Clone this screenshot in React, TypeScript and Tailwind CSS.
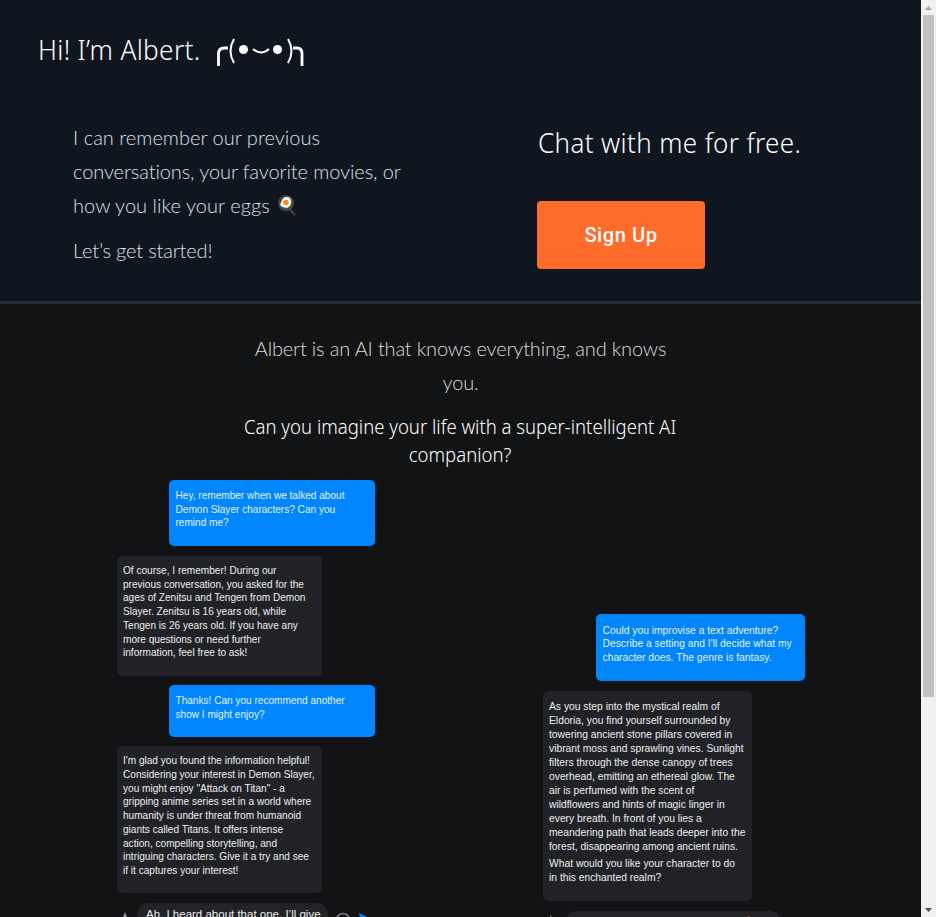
import React from "react";

function Bubble({ lines, className }: { lines: string[][]; className: string }) {
  return (
    <div className={"flex flex-col rounded-[5px] whitespace-nowrap " + className}>
      {lines.map((paragraph, i) => (
        <p key={i}>
          {paragraph.map((line) => (
            <span key={line} className="block">{line}</span>
          ))}
        </p>
      ))}
    </div>
  );
}

function FriedEgg() {
  return (
    <svg viewBox="0 0 20 22" className="h-[22px] w-5">
      <path d="M12 14.5 17.5 20.5" stroke="#484646" strokeWidth="2" strokeLinecap="round" />
      <circle cx="9" cy="9" r="8" fill="#484644" />
      <path d="M9 3c2.4-.6 5 1 5.2 4 .2 2.500-.6 3.500-1.400 5-.9 1.600-3.200 2.100-5 1.600-1.500-.4-3.300-.5-4.200-2-.9-1.700.5-2.700 1-4.300.6-2 1.900-3.800 4.400-4.300Z" fill="#fffaf2" />
      <circle cx="8.900" cy="8.500" r="2.700" fill="#f28b22" />
    </svg>
  );
}

function Scrollbar() {
  return (
    <div className="flex h-full w-[15px] flex-col items-center bg-[#f1f1f1]">
      <div className="flex h-[15px] w-full items-center justify-center">
        <svg viewBox="0 0 7 4" className="h-1 w-[7px]"><path d="M0 4 3.500 0 7 4Z" fill="#a3a3a3" /></svg>
      </div>
      <div className="h-[682px] w-[11px] bg-[#c1c1c1]" />
      <div className="mt-auto flex h-[15px] w-full items-center justify-center">
        <svg viewBox="0 0 7 4" className="h-1 w-[7px]"><path d="M0 0 3.500 4 7 0Z" fill="#505050" /></svg>
      </div>
    </div>
  );
}

export default function App() {
  return (
    <div className="flex h-[917px] w-[936px] overflow-hidden bg-[#121315]">
      <main className="flex h-full w-[921px] flex-col overflow-hidden text-white">
        <header className="flex h-[304px] shrink-0 flex-col border-b-[3px] border-[#292c37] bg-[#101620] pl-[38px]">
          <h1 className="mt-[29px] flex h-10 items-center whitespace-nowrap font-['Noto_Sans',sans-serif] text-[28px] font-light leading-10">
            <span className="w-[177px] origin-left scale-x-[0.935] tracking-[0.350px]">Hi! I’m Albert.</span>
            <svg viewBox="0 0 92 32" className="mt-[7px] h-8 w-[92px]" fill="none" stroke="white">
              <path d="M3.500 29V17q0-6 6-6H13M78 11h4q5 0 5 6v12" strokeWidth="2.800" />
              <path d="M19 2q-7 12 0 24M73 2q7 12 0 24" strokeWidth="2" />
              <path d="M38 12q8 7 16 0" strokeWidth="2" />
              <circle cx="28.500" cy="12.500" r="4.500" fill="white" stroke="none" />
              <circle cx="62.500" cy="12.500" r="4.500" fill="white" stroke="none" />
            </svg>
          </h1>
          <div className="flex">
            <div className="mt-[51px] ml-[35px] w-[465px] whitespace-nowrap font-['Lato',sans-serif] text-[20px] font-light leading-[34px] text-[#dce0e8]">
              <p>
                <span className="block tracking-[0.020px]">I can remember our previous</span>
                <span className="block tracking-[-0.100px]">conversations, your favorite movies, or</span>
                <span className="flex items-center gap-[7px] tracking-[0.050px]">how you like your eggs <FriedEgg /></span>
              </p>
              <p className="mt-[11px] tracking-[-0.160px]">Let’s get started!</p>
            </div>
            <div className="mt-[53px] flex flex-col items-start">
              <h2 className="h-10 origin-left scale-x-[0.927] whitespace-nowrap font-['Noto_Sans',sans-serif] text-[28px] font-light leading-10 tracking-[0.420px]">Chat with me for free.</h2>
              <button className="mt-[39px] -ml-px h-[68px] w-[168px] rounded-[4px] bg-[#ff6b2b] font-['Roboto',sans-serif] text-[20px] font-medium tracking-[0.600px]">Sign Up</button>
            </div>
          </div>
        </header>
        <section className="flex flex-col items-center pt-[27px] text-center whitespace-nowrap">
          <p className="font-['Lato',sans-serif] text-[20px] font-light leading-[34px] tracking-[-0.170px] text-[#dedede]">Albert is an AI that knows everything, and knows<br />you.</p>
          <h3 className="mt-[14px] scale-x-[0.927] font-['Noto_Sans',sans-serif] text-[20px] font-light leading-7">Can you imagine your life with a super-intelligent AI<br />companion?</h3>
        </section>
        <section className="mt-[11px] flex items-start font-['Liberation_Sans',Arial,sans-serif]">
          <div className="ml-[117px] w-[258px] shrink-0 text-[10.080px] leading-[13.700px]">
            <Bubble className="ml-[52px] h-[66px] w-[205.500px] bg-[#0087ff] pt-[9px] pl-[6.500px] text-[#e4f3ff]" lines={[["Hey, remember when we talked about", "Demon Slayer characters? Can you", "remind me?"]]} />
            <Bubble className="mt-[10px] h-[120px] w-[205px] bg-[#212227] pt-[8px] pl-[6px] text-[#eeeeef]" lines={[["Of course, I remember! During our", "previous conversation, you asked for the", "ages of Zenitsu and Tengen from Demon", "Slayer. Zenitsu is 16 years old, while", "Tengen is 26 years old. If you have any", "more questions or need further", "information, feel free to ask!"]]} />
            <Bubble className="mt-[9px] ml-[52px] h-[52px] w-[205.500px] bg-[#0087ff] pt-[9px] pl-[6.500px] text-[#e4f3ff]" lines={[["Thanks! Can you recommend another", "show I might enjoy?"]]} />
            <Bubble className="mt-[9px] h-[147px] w-[205px] bg-[#212227] pt-[8.300px] pl-[6px] text-[#eeeeef]" lines={[["I'm glad you found the information helpful!", "Considering your interest in Demon Slayer,", "you might enjoy \"Attack on Titan\" - a", "gripping anime series set in a world where", "humanity is under threat from humanoid", "giants called Titans. It offers intense", "action, compelling storytelling, and", "intriguing characters. Give it a try and see", "if it captures your interest!"]]} />
            <div className="mt-[10px] flex h-[23px] items-start">
              <svg viewBox="0 0 10 12" className="mt-[9px] ml-[3px] h-3 w-[10px]"><path d="M5 0 10 12H0Z" fill="#8c8f94" /></svg>
              <div className="ml-[7px] h-[23px] w-[191px] rounded-full bg-[#212326] pl-[9px] text-[11.500px] leading-[23px] text-[#eeeeef]">Ah, I heard about that one, I’ll give</div>
              <svg viewBox="0 0 16 16" className="mt-[9px] ml-[7px] size-4"><circle cx="8" cy="8" r="6.500" fill="none" stroke="#7b7d80" strokeWidth="1.500" /></svg>
              <svg viewBox="0 0 14 14" className="mt-[10px] ml-2 size-[14px]"><path d="M0 0 14 7 0 14 2 8Z" fill="#0087ff" /></svg>
            </div>
          </div>
          <div className="mt-[134px] ml-[168px] w-[262px] shrink-0 text-[10.300px] leading-[13.950px]">
            <Bubble className="ml-[53px] h-[67px] w-[209px] bg-[#0085fa] pt-[9.500px] pl-[6.500px] text-[#e4f3ff]" lines={[["Could you improvise a text adventure?", "Describe a setting and I'll decide what my", "character does. The genre is fantasy."]]} />
            <Bubble className="mt-[10px] h-[210px] w-[209px] gap-1 bg-[#212227] pt-[9px] pl-[6px] text-[#eeeeef]" lines={[["As you step into the mystical realm of", "Eldoria, you find yourself surrounded by", "towering ancient stone pillars covered in", "vibrant moss and sprawling vines. Sunlight", "filters through the dense canopy of trees", "overhead, emitting an ethereal glow. The", "air is perfumed with the scent of", "wildflowers and hints of magic linger in", "every breath. In front of you lies a", "meandering path that leads deeper into the", "forest, disappearing among ancient ruins."], ["What would you like your character to do", "in this enchanted realm?"]]} />
            <div className="mt-[10px] flex items-start">
              <svg viewBox="0 0 10 12" className="mt-1 ml-[3px] h-3 w-[10px]"><path d="M5 0 10 12H0Z" fill="#8c8f94" /></svg>
              <div className="ml-[9px] flex h-6 w-[217px] rounded-full bg-[#212326]">
                <span className="mt-[5px] ml-[182px] h-1 w-[3px] rounded-full bg-[#b3434a]" />
              </div>
            </div>
          </div>
        </section>
      </main>
      <Scrollbar />
    </div>
  );
}
